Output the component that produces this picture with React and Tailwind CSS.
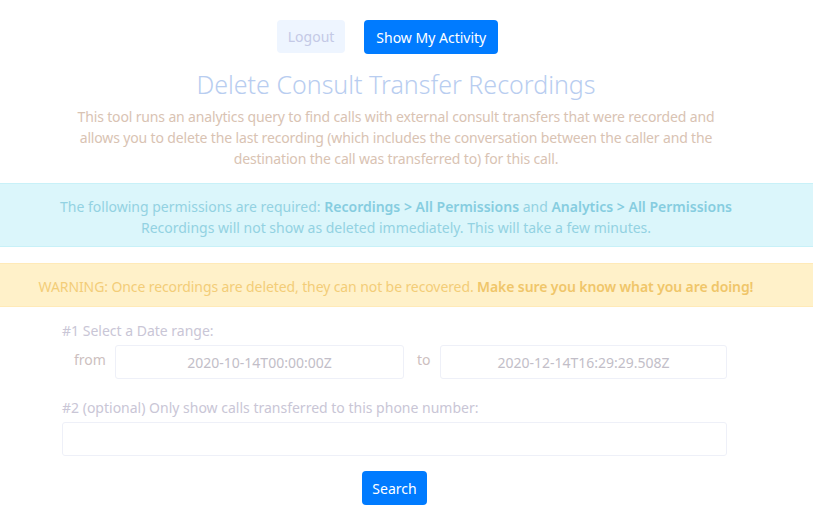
import React, { useState } from 'react';

function App() {
  const [from, setFrom] = useState('2020-10-14T00:00:00Z');
  const [to, setTo] = useState('2020-12-14T16:29:29.508Z');
  const [phone, setPhone] = useState('');

  return (
    <div className="min-h-screen bg-white text-[14px] leading-[21px]" style={{ fontFamily: '"Noto Sans", "Open Sans", sans-serif' }}>
      {/* ===== Top buttons ===== */}
      <div className="w-[792px] flex justify-center gap-[19px] pt-[20px] pr-[17px]">
        <button className="h-[33px] px-[11px] rounded-[4px] bg-[#eef5ff] text-[#c4c9e6] text-[14px]">Logout</button>
        <button className="h-[34px] px-[12px] rounded-[4px] bg-[#007bff] text-white text-[14px]">Show My Activity</button>
      </div>

      {/* ===== Title + description ===== */}
      <div className="w-[792px]">
        <h1 className="mt-[15px] text-center text-[25px] leading-[30px] font-light text-[#b8cdf0]">
          Delete Consult Transfer Recordings
        </h1>
        <p className="mx-auto mt-[7px] w-[662px] text-center text-[#d9c3b3] tracking-[-0.15px]">
          This tool runs an analytics query to find calls with external consult transfers that were recorded and
          allows you to delete the last recording (which includes the conversation between the caller and the
          destination the call was transferred to) for this call.
        </p>
      </div>

      {/* ===== Info banner ===== */}
      <div className="mt-[14px] border-y border-[#c8f1f8] bg-[#dbf6fb] pt-[12px] pb-[8px] text-[#93d2e2]">
        <div className="w-[792px] text-center">
          <div>
            The following permissions are required: <b className="font-semibold text-[#86cde0]">Recordings &gt; All Permissions</b> and{' '}
            <b className="font-semibold text-[#86cde0]">Analytics &gt; All Permissions</b>
          </div>
          <div>Recordings will not show as deleted immediately. This will take a few minutes.</div>
        </div>
      </div>

      {/* ===== Warning banner ===== */}
      <div className="mt-[16px] border-y border-[#ffeab8] bg-[#fff1c9] pt-[12px] pb-[9px] text-[#f3cd78]">
        <div className="w-[792px] text-center tracking-[-0.1px]">
          WARNING: Once recordings are deleted, they can not be recovered.{' '}
          <b className="font-semibold text-[#f0c66a]">Make sure you know what you are doing!</b>
        </div>
      </div>

      {/* ===== Form ===== */}
      <div className="ml-[62px] mt-[13px] w-[665px]">
        <div className="text-[#c9c6d6]">#1 Select a Date range:</div>
        <div className="mt-[4px] flex items-center">
          <span className="w-[53px] pl-[12px] text-[#cdbfc0] -mt-[6px]">from</span>
          <input
            value={from}
            onChange={(e) => setFrom(e.target.value)}
            className="h-[34px] w-[289px] rounded-[3px] border border-[#eef0f8] text-center text-[#c2bec8] outline-none"
          />
          <span className="w-[36px] pl-[13px] text-[#cdbfc0] -mt-[6px]">to</span>
          <input
            value={to}
            onChange={(e) => setTo(e.target.value)}
            className="h-[34px] w-[287px] rounded-[3px] border border-[#eef0f8] text-center text-[#c2bec8] outline-none"
          />
        </div>
        <div className="mt-[18px] text-[#c9c6d6]">#2 (optional) Only show calls transferred to this phone number:</div>
        <input
          value={phone}
          onChange={(e) => setPhone(e.target.value)}
          className="mt-[4px] h-[34px] w-full rounded-[3px] border border-[#eef0f8] outline-none"
        />
        <div className="mt-[15px] flex justify-center">
          <button className="h-[34px] px-[10px] rounded-[4px] bg-[#007bff] text-white text-[14px]">Search</button>
        </div>
      </div>
    </div>
  );
}

export default App;
